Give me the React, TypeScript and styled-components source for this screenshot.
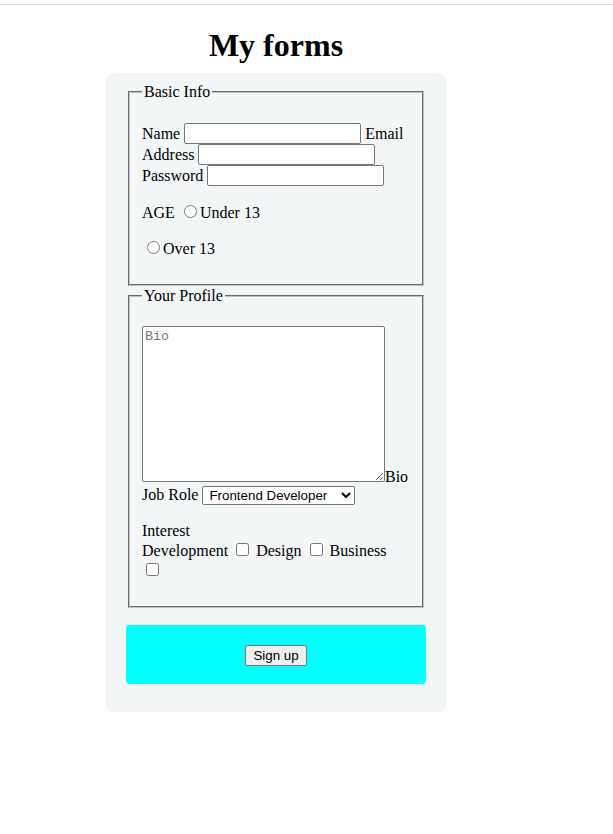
import React from "react";
import styled, { createGlobalStyle } from "styled-components";

const Global = createGlobalStyle`
  html, body { margin: 0; padding: 0; background: #fff; }
  body { font-family: "Liberation Serif", "Times New Roman", serif; font-size: 16px; color: #000; }
`;

const TopRule = styled.div`
  height: 4px;
  border-bottom: 1px solid #dedede;
`;

const Page = styled.div`
  width: 552px;
  display: flex;
  flex-direction: column;
  align-items: center;
`;

const Title = styled.h1`
  font-size: 32px;
  font-weight: bold;
  margin: 22px 0 9px;
  line-height: 37px;
`;

const Card = styled.form`
  width: 300px;
  background: #f2f6f7;
  border-radius: 8px;
  padding: 10px 20px 28px;
`;

const Fieldset = styled.fieldset<{ $offset?: number }>`
  margin: ${(p) => p.$offset ?? 0}px 2px 0;
  padding: 0.35em 0.75em 0.625em;
  border: 2px groove rgb(192, 192, 192);
`;

const Legend = styled.legend`
  padding: 0 2px;
`;

const Para = styled.p<{ $tight?: boolean; $top?: number }>`
  margin: ${(p) => p.$top ?? 16}px 0 16px;
  line-height: ${(p) => (p.$tight ? "21px" : "normal")};
`;

const TextInput = styled.input`
  box-sizing: border-box;
  width: 177px;
  height: 21px;
  padding: 1px 2px;
  border: 1px solid #767676;
  border-radius: 2px;
  background: #fff;
  font: 13.33px "Liberation Sans", Arial, sans-serif;
  vertical-align: bottom;
  margin: 0;
`;

const Radio = styled.input`
  width: 13px;
  height: 13px;
  margin: 3px 3px 0 5px;
  accent-color: #767676;
`;

const Check = styled.input`
  width: 13px;
  height: 13px;
  margin: 3px 3px 3px 4px;
`;

const Bio = styled.textarea`
  box-sizing: border-box;
  width: 243px;
  height: 156px;
  padding: 2px;
  border: 1px solid #767676;
  border-radius: 2px;
  font: 13.33px "Liberation Mono", "Courier New", monospace;
  margin: 0;
  resize: both;
  &::placeholder { color: #757575; }
`;

const Block = styled.div`
  margin: 16px 0 0;
`;

const Select = styled.select`
  box-sizing: border-box;
  width: 153px;
  height: 19px;
  font: 13.33px "Liberation Sans", Arial, sans-serif;
  border: 1px solid #767676;
  border-radius: 2px;
  background: #fff;
  padding: 0 0 0 2px;
`;

const Row = styled.div``;

const Actions = styled.div`
  margin-top: 17px;
  background: #00ffff;
  border-radius: 4px;
  display: flex;
  justify-content: center;
  padding: 20px 0 18px;
`;

const Button = styled.button`
  box-sizing: border-box;
  height: 21px;
  width: 62px;
  padding: 1px 6px;
  font: 13.33px "Liberation Sans", Arial, sans-serif;
  color: #000;
  background: #efefef;
  border: 1px solid #767676;
  border-radius: 2px;
`;

export default function App() {
  return (
    <>
      <Global />
      <TopRule />
      <Page>
        <Title>My forms</Title>
        <Card onSubmit={(e) => e.preventDefault()}>
          <Fieldset>
            <Legend>Basic Info</Legend>
            <Para $tight>
              Name <TextInput type="text" /> Email Address <TextInput type="email" /> Password{" "}
              <TextInput type="password" />
            </Para>
            <Para>
              AGE <Radio type="radio" name="age" />Under 13
            </Para>
            <Para>
              <Radio type="radio" name="age" />Over 13
            </Para>
          </Fieldset>
          <Fieldset $offset={1}>
            <Legend>Your Profile</Legend>
            <Block>
              <Bio placeholder="Bio" />Bio
            </Block>
            <Row>
              Job Role{" "}
              <Select defaultValue="fe">
                <option value="fe">Frontend Developer</option>
                <option value="be">Backend Developer</option>
              </Select>
            </Row>
            <Para $top={17}>
              Interest
              <br />
              Development <Check type="checkbox" /> Design <Check type="checkbox" /> Business{" "}
              <Check type="checkbox" />
            </Para>
          </Fieldset>
          <Actions>
            <Button type="submit">Sign up</Button>
          </Actions>
        </Card>
      </Page>
    </>
  );
}
